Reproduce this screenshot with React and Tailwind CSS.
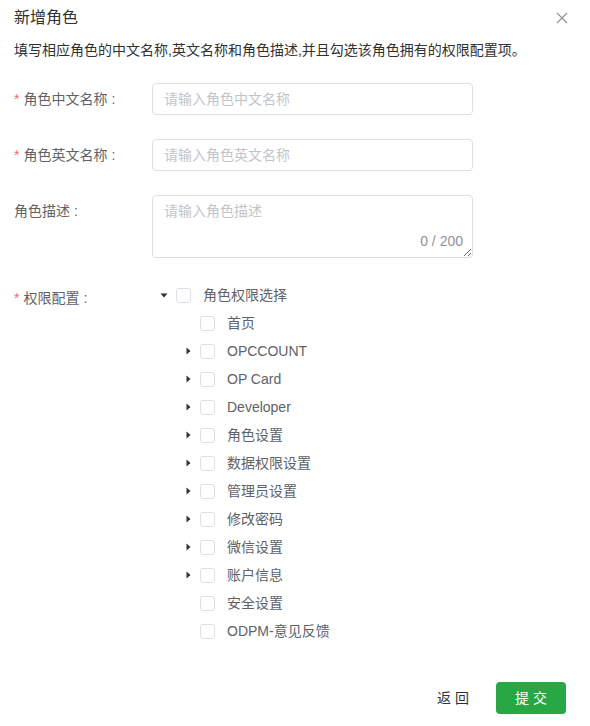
import React, { useState } from 'react';

const nodes = [
  { label: '首页', leaf: true },
  { label: 'OPCCOUNT' },
  { label: 'OP Card' },
  { label: 'Developer' },
  { label: '角色设置' },
  { label: '数据权限设置' },
  { label: '管理员设置' },
  { label: '修改密码' },
  { label: '微信设置' },
  { label: '账户信息' },
  { label: '安全设置', leaf: true },
  { label: 'ODPM-意见反馈', leaf: true },
];

const Caret = ({ open }) => (
  <svg width="12" height="12" viewBox="0 0 12 12" className="text-[#303133]">
    {open ? (
      <path d="M2.5 4.5 L9.5 4.5 L6 8.5 Z" fill="currentColor" />
    ) : (
      <path d="M4.5 2.5 L8.5 6 L4.5 9.5 Z" fill="currentColor" />
    )}
  </svg>
);

const Checkbox = () => (
  <span className="inline-block w-[15px] h-[15px] border border-[#dcdfe6] rounded-[3px] bg-white shrink-0" />
);

const TreeRow = ({ label, leaf, open, indent }) => (
  <div className="flex items-center h-7" style={{ paddingLeft: indent }}>
    <span className="w-6 flex justify-center items-center">
      {!leaf && <Caret open={open} />}
    </span>
    <Checkbox />
    <span className="ml-[12px] text-[#606266]">{label}</span>
  </div>
);

const Label = ({ required, children, className = '' }) => (
  <div className={`w-[138px] shrink-0 text-[#606266] ${className}`}>
    {required && <span className="text-[#f56c6c] mr-[4px]">*</span>}
    {children}
    <span className="ml-[4px]">:</span>
  </div>
);

export default function App() {
  const [desc, setDesc] = useState('');
  return (
    <div
      className="w-[590px] h-[726px] bg-white text-sm relative"
      style={{ fontFamily: '"Liberation Sans", "Noto Sans CJK SC", sans-serif' }}
    >
      <div className="px-[14px] pt-[6px]">
        <div className="flex items-center justify-between h-6 pr-[8px]">
          <span className="text-base text-[#303133]">新增角色</span>
          <svg width="12" height="12" viewBox="0 0 12 12" className="text-[#909399]">
            <path d="M1 1 L11 11 M11 1 L1 11" stroke="currentColor" strokeWidth="1.1" />
          </svg>
        </div>
        <p className="mt-[10px] leading-5 text-[#303133]">
          填写相应角色的中文名称,英文名称和角色描述,并且勾选该角色拥有的权限配置项。
        </p>

        <div className="mt-[23px] flex items-center">
          <Label required className="leading-8">角色中文名称</Label>
          <input
            className="w-[321px] h-8 border border-[#dcdfe6] rounded-[4px] px-[11px] outline-none placeholder:text-[#c0c4cc] text-[#606266]"
            placeholder="请输入角色中文名称"
          />
        </div>

        <div className="mt-6 flex items-center">
          <Label required className="leading-8">角色英文名称</Label>
          <input
            className="w-[321px] h-8 border border-[#dcdfe6] rounded-[4px] px-[11px] outline-none placeholder:text-[#c0c4cc] text-[#606266]"
            placeholder="请输入角色英文名称"
          />
        </div>

        <div className="mt-6 flex items-start">
          <Label className="leading-8">角色描述</Label>
          <div className="relative w-[321px] h-[63px]">
            <textarea
              value={desc}
              onChange={(e) => setDesc(e.target.value)}
              className="block w-full h-full border border-[#dcdfe6] rounded-[4px] px-[11px] py-[5px] leading-5 outline-none resize-y placeholder:text-[#c0c4cc] text-[#606266]"
              placeholder="请输入角色描述"
            />
            <span className="absolute right-[10px] bottom-[7px] text-[#909399] leading-5 bg-white">
              {desc.length} / 200
            </span>
          </div>
        </div>

        <div className="mt-[23px] flex items-start">
          <Label required className="leading-[35px]">权限配置</Label>
          <div>
            <TreeRow label="角色权限选择" open indent={0} />
            {nodes.map((n) => (
              <TreeRow key={n.label} label={n.label} leaf={n.leaf} indent={24} />
            ))}
          </div>
        </div>

        <div className="mt-[37px] flex justify-end items-center pr-[10px]">
          <button className="text-[#303133] px-[13px] h-8 mr-[14px]">返 回</button>
          <button className="w-[70px] h-8 rounded-[4px] bg-[#28a745] text-white">提 交</button>
        </div>
      </div>
    </div>
  );
}
